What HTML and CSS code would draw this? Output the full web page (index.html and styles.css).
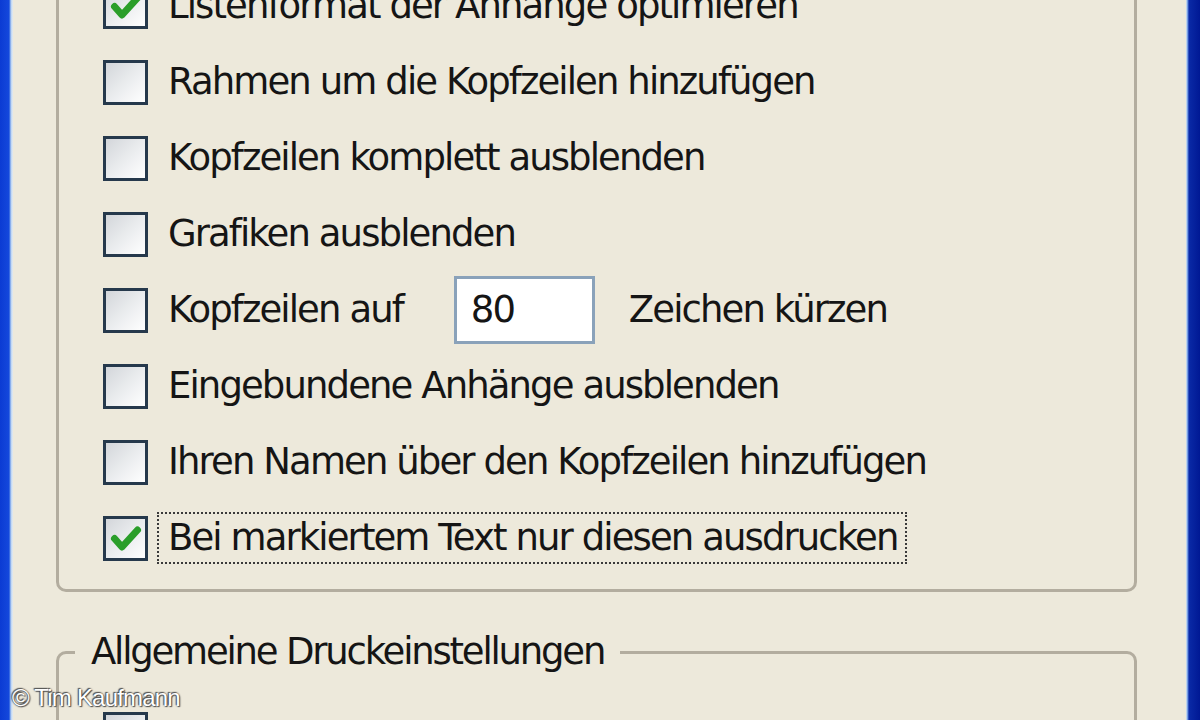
FILE: index.html
```html
<!DOCTYPE html>
<html lang="de">
<head>
<meta charset="utf-8">
<title>Druckoptionen</title>
<link rel="stylesheet" href="styles.css">
</head>
<body>
<div class="screen">
  <div class="frame-left"></div>
  <div class="dialog">
    <div class="group group-top">
      <div class="row"><span class="cb checked"><svg viewBox="0 0 39 39"><path d="M8.5 19.5 L16 28 L31.5 11" /></svg></span><span class="label">Listenformat der Anhänge optimieren</span></div>
      <div class="row"><span class="cb"></span><span class="label">Rahmen um die Kopfzeilen hinzufügen</span></div>
      <div class="row"><span class="cb"></span><span class="label">Kopfzeilen komplett ausblenden</span></div>
      <div class="row"><span class="cb"></span><span class="label">Grafiken ausblenden</span></div>
      <div class="row"><span class="cb"></span><span class="label">Kopfzeilen auf</span><span class="field">80</span><span class="label after">Zeichen kürzen</span></div>
      <div class="row"><span class="cb"></span><span class="label">Eingebundene Anhänge ausblenden</span></div>
      <div class="row"><span class="cb"></span><span class="label">Ihren Namen über den Kopfzeilen hinzufügen</span></div>
      <div class="row"><span class="cb checked"><svg viewBox="0 0 39 39"><path d="M8.5 19.5 L16 28 L31.5 11" /></svg></span><span class="label focus">Bei markiertem Text nur diesen ausdrucken</span></div>
    </div>
    <fieldset class="group group-bottom">
      <legend>Allgemeine Druckeinstellungen</legend>
      <div class="row inner"><span class="cb"></span></div>
    </fieldset>
  </div>
  <div class="frame-right"></div>
  <div class="watermark">© Tim Kaufmann</div>
</div>
</body>
</html>
```

FILE: styles.css
```css
html, body {
  margin: 0;
  padding: 0;
}
body {
  width: 1200px;
  height: 720px;
  overflow: hidden;
  background: #ece9d8;
  font-family: "DejaVu Sans", "Liberation Sans", sans-serif;
  color: #151515;
}
.screen {
  position: relative;
  display: flex;
  width: 1200px;
  height: 720px;
  overflow: hidden;
}
.frame-left {
  width: 13px;
  flex: none;
  background: linear-gradient(to right, #0b3bd3 0, #1448dc 9px, #5e8ee8 10px, #b9d2f2 11px, #e6ecf0 13px);
}
.frame-right {
  width: 14px;
  flex: none;
  background: linear-gradient(to right, #dde8ee 0, #9cc0ee 1px, #5076d8 2px, #0a2aa6 3px, #001894 14px);
}
.dialog {
  flex: 1;
  background: #ede9db;
  padding: 0 49px 0 43px;
}
.group {
  border: 3px solid #b3ad9f;
  border-radius: 10px;
}
.group-top {
  margin-top: -52px;
  padding: 17px 0 13px 44px;
}
.row {
  display: flex;
  align-items: center;
  height: 76px;
}
.cb {
  flex: none;
  width: 39px;
  height: 39px;
  border: 3px solid #26394c;
  background: linear-gradient(135deg, #d3d6da 0%, #eceef0 55%, #ffffff 100%);
  display: flex;
}
.cb svg {
  width: 39px;
  height: 39px;
}
.cb svg path {
  fill: none;
  stroke: #2a9e2a;
  stroke-width: 7;
  stroke-linecap: round;
  stroke-linejoin: round;
}
.label {
  font-size: 37px;
  letter-spacing: -1.9px;
  margin-left: 20px;
  line-height: 44px;
  white-space: nowrap;
}
.label.after {
  margin-left: 34px;
}
.label.focus {
  margin-left: 9px;
  padding: 2px 8px 2px 9px;
  border: 2px dotted #3a3a3a;
}
.field {
  flex: none;
  margin-left: 51px;
  width: 121px;
  height: 62px;
  border: 3px solid #8aa2ba;
  background: #ffffff;
  font-size: 37px;
  letter-spacing: -1.9px;
  line-height: 62px;
  padding-left: 14px;
}
.group-bottom {
  margin: 38px 0 0 0;
  padding: 22px 0 0 0;
  min-inline-size: 0;
}
.group-bottom legend {
  font-size: 37px;
  letter-spacing: -2.2px;
  line-height: 44px;
  margin-left: 16px;
  padding: 0 16px 0 16px;
}
.row.inner {
  margin-left: 44px;
}
.watermark {
  position: absolute;
  left: 12px;
  top: 684px;
  font-family: "Liberation Sans", Arial, sans-serif;
  font-size: 24px;
  letter-spacing: -0.8px;
  color: #ffffff;
  text-shadow: 0 0 2px #3a3a3a, 1px 1px 1px #555555, -1px -1px 1px #555555;
}
```
